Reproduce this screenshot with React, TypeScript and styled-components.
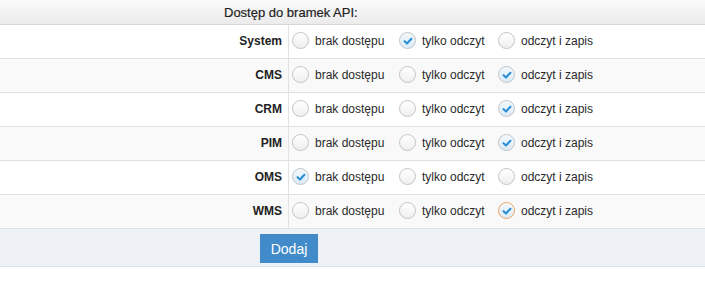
import React from "react";
import styled, { createGlobalStyle } from "styled-components";

const GlobalStyle = createGlobalStyle`
  body {
    margin: 0;
    background: #ffffff;
    font-family: "Liberation Sans", Arial, sans-serif;
    color: #333333;
  }
`;

const Table = styled.div`
  width: 705px;
`;

const Header = styled.div`
  height: 24px;
  display: flex;
  align-items: center;
  padding-left: 224px;
  font-size: 13px;
  color: #1f1f1f;
  -webkit-text-stroke: 0.2px #1f1f1f;
  background: linear-gradient(to bottom, #fafafa, #ebebeb);
  border-bottom: 1px solid #d6d6d6;
`;

const Row = styled.div<{ $alt: boolean }>`
  display: grid;
  grid-template-columns: 289px 1fr;
  height: 33px;
  background: ${(p) => (p.$alt ? "#f9f9f9" : "#ffffff")};
  border-bottom: 1px solid #e0e0e0;
`;

const Label = styled.div`
  display: flex;
  align-items: center;
  justify-content: flex-end;
  padding: 0 6px 2px 0;
  font-size: 12px;
  font-weight: bold;
  color: #222;
  border-right: 1px solid #e2e2e2;
`;

const Options = styled.div`
  display: flex;
  align-items: center;
  padding: 0 0 2px 3px;
`;

const Option = styled.label<{ $w: number }>`
  display: flex;
  align-items: center;
  gap: 6px;
  width: ${(p) => p.$w}px;
  font-size: 12px;
  color: #2a2a2a;
`;

const Circle = styled.span<{ $checked: boolean; $focus: boolean }>`
  width: 17px;
  height: 17px;
  box-sizing: border-box;
  border-radius: 50%;
  border: 1px solid ${(p) => (p.$focus ? "#f0a35c" : "#c4c4c4")};
  background: ${(p) =>
    p.$checked
      ? "linear-gradient(to bottom, #f2f8fd, #dcebf7)"
      : "linear-gradient(to bottom, #ffffff, #efefef)"};
  display: flex;
  align-items: center;
  justify-content: center;
`;

const Footer = styled.div`
  background: #eef1f5;
  border-bottom: 1px solid #dcdfe3;
  padding: 5px 0 3px 260px;
`;

const Button = styled.button`
  width: 58px;
  height: 29px;
  border: none;
  background: #418bca;
  color: #ffffff;
  font-family: "Liberation Sans", Arial, sans-serif;
  font-size: 14px;
  padding: 0;
  display: block;
`;

const choices = ["brak dostępu", "tylko odczyt", "odczyt i zapis"];
const widths = [107, 99, 110];

const rows: { name: string; value: number; focus?: boolean }[] = [
  { name: "System", value: 1 },
  { name: "CMS", value: 2 },
  { name: "CRM", value: 2 },
  { name: "PIM", value: 2 },
  { name: "OMS", value: 0 },
  { name: "WMS", value: 2, focus: true },
];

const Radio = ({ checked, focus }: { checked: boolean; focus: boolean }) => (
  <Circle $checked={checked} $focus={focus}>
    {checked && (
      <svg width="10" height="10" viewBox="0 0 10 10">
        <path
          d="M1.6 5.2 L4 7.4 L8.4 2.8"
          fill="none"
          stroke="#2b8fd6"
          strokeWidth="2.1"
          strokeLinecap="round"
          strokeLinejoin="round"
        />
      </svg>
    )}
  </Circle>
);

export default function App() {
  return (
    <>
      <GlobalStyle />
      <Table>
        <Header>Dostęp do bramek API:</Header>
        {rows.map((r, i) => (
          <Row key={r.name} $alt={i % 2 === 1}>
            <Label>{r.name}</Label>
            <Options>
              {choices.map((c, j) => (
                <Option key={c} $w={widths[j]}>
                  <Radio checked={r.value === j} focus={!!r.focus && r.value === j} />
                  {c}
                </Option>
              ))}
            </Options>
          </Row>
        ))}
        <Footer>
          <Button>Dodaj</Button>
        </Footer>
      </Table>
    </>
  );
}
